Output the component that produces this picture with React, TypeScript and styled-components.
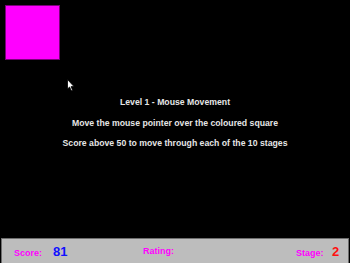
import React from "react";
import styled, { createGlobalStyle } from "styled-components";

const Global = createGlobalStyle`
  html, body { margin: 0; padding: 0; background: #000; }
  body { font-family: "Liberation Sans", Arial, sans-serif; }
`;

const Screen = styled.div`
  width: 350px;
  height: 263px;
  background: #000;
  display: flex;
  flex-direction: column;
  overflow: hidden;
`;

const Stage = styled.div`
  position: relative;
  flex: 1;
  padding: 5px;
  box-sizing: border-box;
`;

const Target = styled.div<{ $color: string }>`
  width: 55px;
  height: 55px;
  box-sizing: border-box;
  background: ${(p) => p.$color};
  border: 1px solid #7a007a;
`;

const Messages = styled.div`
  display: flex;
  flex-direction: column;
  align-items: center;
  gap: 9.5px;
  margin-top: 37px;
`;

const Line = styled.div`
  color: #e6e6e6;
  font-weight: bold;
  font-size: 8.7px;
  line-height: 11px;
  white-space: nowrap;
`;

const Pointer = styled.svg`
  position: absolute;
  left: 67px;
  top: 79px;
`;

const Bar = styled.div`
  height: 25px;
  box-sizing: border-box;
  margin: 0 1px;
  background: #bdbdbd;
  border: 1px solid #6e6e6e;
  border-bottom: none;
  display: flex;
  align-items: center;
  padding: 0 0 0 12px;
`;

const Group = styled.div<{ $width: number; $labelWidth: number }>`
  display: flex;
  align-items: baseline;
  width: ${(p) => p.$width}px;
  & > span:first-child {
    width: ${(p) => p.$labelWidth}px;
  }
`;

const Label = styled.span`
  color: #ff00ff;
  font-weight: bold;
  font-size: 9px;
`;

const Value = styled.span<{ $color: string }>`
  color: ${(p) => p.$color};
  font-weight: bold;
  font-size: 13px;
`;

export default function App() {
  return (
    <>
      <Global />
      <Screen>
        <Stage>
          <Target $color="#ff00ff" />
          <Messages>
            <Line>Level 1 - Mouse Movement</Line>
            <Line>Move the mouse pointer over the coloured square</Line>
            <Line>Score above 50 to move through each of the 10 stages</Line>
          </Messages>
          <Pointer width="8" height="13" viewBox="0 0 8 13">
            <path
              d="M0.5 0.5 L0.5 10 L2.6 8 L4.2 11.8 L5.6 11.2 L4.1 7.6 L7 7.6 Z"
              fill="#fff"
              stroke="#000"
              strokeWidth="0.8"
            />
          </Pointer>
        </Stage>
        <Bar>
          <Group $width={129} $labelWidth={39}>
            <Label>Score:</Label>
            <Value $color="#1010ff">81</Value>
          </Group>
          <Group $width={153} $labelWidth={40}>
            <Label>Rating:</Label>
          </Group>
          <Group $width={50} $labelWidth={36}>
            <Label>Stage:</Label>
            <Value $color="#ff1010">2</Value>
          </Group>
        </Bar>
      </Screen>
    </>
  );
}
